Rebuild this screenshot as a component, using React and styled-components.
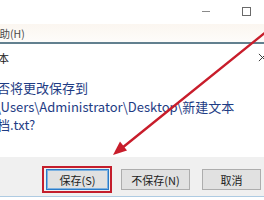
import styled, { createGlobalStyle } from 'styled-components';

const GlobalStyle = createGlobalStyle`
  html, body {
    margin: 0;
    padding: 0;
    background: #ffffff;
    overflow: hidden;
  }
  body {
    font-family: "Noto Sans CJK SC", "Noto Sans", sans-serif;
  }
`;

function App() {
  return (
    <Page>
      <GlobalStyle />
      <TitleBar>
        <Caption aria-label="minimize">
          <MinGlyph />
        </Caption>
        <Caption aria-label="maximize">
          <MaxGlyph />
        </Caption>
        <Caption aria-label="close" />
      </TitleBar>

      <MenuBar>
        <MenuItem>帮助(H)</MenuItem>
      </MenuBar>
      <Divider />

      <Dialog>
        <DialogHead>
          <DialogTitle>记事本</DialogTitle>
          <CloseIcon viewBox="0 0 10 10">
            <path d="M1 1 L9 9 M9 1 L1 9" stroke="#3a3a3a" strokeWidth="1.1" fill="none" />
          </CloseIcon>
        </DialogHead>

        <Body>
          <Line>是否将更改保存到</Line>
          <Line>C:\Users\Administrator\Desktop\新建文本</Line>
          <Line>文档.txt?</Line>
        </Body>

        <Footer>
          <Marked>
            <Button $width={63} $primary>保存(S)</Button>
          </Marked>
          <Button $width={69}>不保存(N)</Button>
          <Button $width={59}>取消</Button>
        </Footer>
        <BottomEdge />
      </Dialog>

      <Annotation viewBox="0 0 264 200" width="264" height="200">
        <line x1="272" y1="27" x2="122" y2="148" stroke="#c81d2b" strokeWidth="2.4" strokeLinecap="round" />
        <polygon points="113,155 127,150.5 120,141.5" fill="#c81d2b" />
      </Annotation>
    </Page>
  );
}

const Page = styled.div`
  position: relative;
  width: 264px;
  height: 200px;
  overflow: hidden;
  background: #ffffff;
`;

const TitleBar = styled.div`
  display: flex;
  height: 24px;
  padding-left: 186px;
  background: #ffffff;
`;

const Caption = styled.div`
  flex: 0 0 40px;
  display: flex;
  align-items: center;
  justify-content: center;
  padding-bottom: 2px;
`;

const MinGlyph = styled.span`
  width: 8px;
  height: 1px;
  background: #8a8a8a;
`;

const MaxGlyph = styled.span`
  width: 7px;
  height: 7px;
  border: 1px solid #6a6a6a;
`;

const MenuBar = styled.div`
  display: flex;
  align-items: center;
  height: 18px;
  background: linear-gradient(#fbf6f0, #fdfcfa);
`;

const MenuItem = styled.span`
  margin-left: -11px;
  font-size: 10.5px;
  color: #4a4a4a;
`;

const Divider = styled.div`
  height: 2px;
  background: #62808f;
`;

const Dialog = styled.div`
  display: flex;
  flex-direction: column;
  background: #ffffff;
`;

const DialogHead = styled.div`
  display: flex;
  align-items: center;
  justify-content: space-between;
  height: 27px;
`;

const DialogTitle = styled.span`
  margin-left: -24px;
  font-size: 11px;
  color: #222222;
`;

const CloseIcon = styled.svg`
  width: 9px;
  height: 9px;
  margin-right: -3px;
`;

const Body = styled.div`
  display: flex;
  flex-direction: column;
  height: 86px;
  padding-top: 8px;
  margin-left: -16px;
  box-sizing: border-box;
`;

const Line = styled.div`
  font-size: 13px;
  line-height: 18.5px;
  color: #1e3c84;
  white-space: nowrap;
`;

const Footer = styled.div`
  display: flex;
  align-items: flex-start;
  gap: 12px;
  height: 39px;
  padding: 12px 0 0 46px;
  box-sizing: border-box;
  background: #f0f0f0;
`;

const Button = styled.div`
  display: flex;
  align-items: center;
  justify-content: center;
  width: ${p => p.$width}px;
  height: 21px;
  box-sizing: border-box;
  background: #e1e1e1;
  border: 1px solid ${p => (p.$primary ? '#2b7bc8' : '#adadad')};
  box-shadow: ${p => (p.$primary ? 'inset 0 0 0 1px #7fb2e0' : 'none')};
  font-size: 11px;
  color: #222222;
`;

const Marked = styled.div`
  position: relative;
  display: flex;

  &::after {
    content: "";
    position: absolute;
    inset: -3px -3px -3px -4px;
    border: 2.5px solid #c41e2c;
    pointer-events: none;
  }
`;

const BottomEdge = styled.div`
  height: 1px;
  background: #aecbe2;
`;

const Annotation = styled.svg`
  position: absolute;
  left: 0;
  top: 0;
  pointer-events: none;
`;

export default App;
